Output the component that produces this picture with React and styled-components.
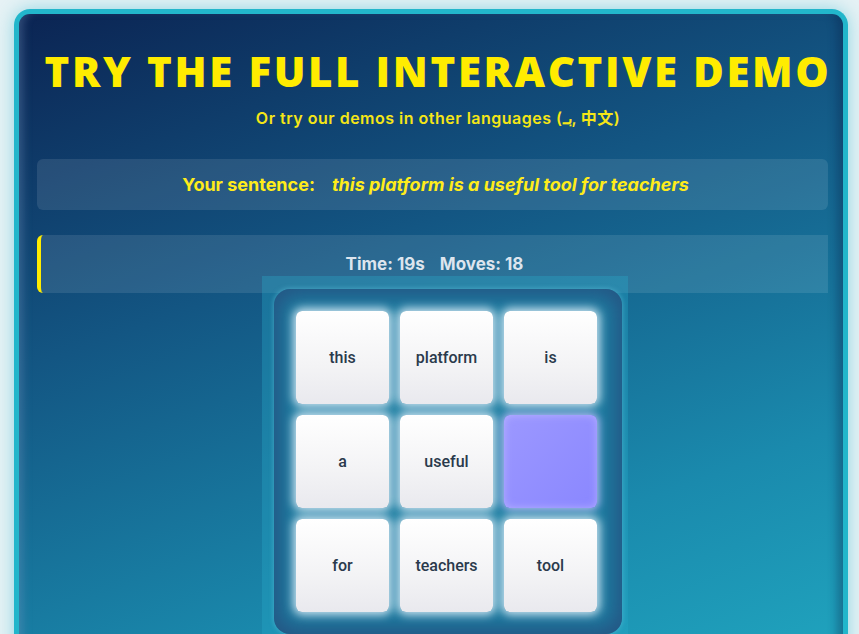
import React from "react";
import styled, { createGlobalStyle } from "styled-components";

const Global = createGlobalStyle`
  html, body { margin: 0; padding: 0; height: 100%; overflow: hidden; }
  body { background: #e6f2f5; font-family: "Inter", "Noto Sans", sans-serif; }
`;

const Page = styled.div`
  padding: 9px 11px 0 14px;
`;

const Card = styled.section`
  position: relative;
  height: 720px;
  border: 5px solid #22b6cb;
  border-bottom: none;
  border-radius: 16px 16px 0 0;
  background: linear-gradient(160deg, #0b2453 0%, #135683 35%, #1a8aad 70%, #22adc4 100%);
  box-shadow: 0 0 18px rgba(40, 180, 205, 0.45), inset 8px 0 8px -4px rgba(120, 150, 190, 0.35),
    inset -10px 0 10px -4px rgba(10, 30, 70, 0.35);
  padding: 0 15px 0 18px;
  overflow: hidden;
`;

const Title = styled.h1`
  margin: 31px -11px 0 0;
  white-space: nowrap;
  text-align: center;
  font-family: "Open Sans", sans-serif;
  font-weight: 800;
  font-size: 42px;
  letter-spacing: 2.6px;
  line-height: 52px;
  color: #ffec00;
`;

const Sub = styled.p`
  margin: 8px -11px 0 0;
  white-space: nowrap;
  text-align: center;
  font-family: "Inter", "Noto Sans", "Noto Sans CJK SC", sans-serif;
  font-weight: 600;
  font-size: 16px;
  letter-spacing: 0.5px;
  color: #f5e616;
`;

const SentenceBox = styled.div`
  margin-top: 30px;
  height: 51px;
  border-radius: 6px;
  background: rgba(255, 255, 255, 0.1);
  display: flex;
  align-items: center;
  justify-content: center;
  gap: 17px;
  padding-left: 6px;
  font-family: "Inter", sans-serif;
  font-weight: 700;
  font-size: 18px;
  color: #ffec1a;
`;

const Italic = styled.em`
  font-style: italic;
`;

const StatsBox = styled.div`
  margin-top: 25px;
  height: 58px;
  box-sizing: border-box;
  border-left: 4px solid #ffec00;
  border-radius: 6px 0 0 6px;
  background: rgba(255, 255, 255, 0.1);
  display: flex;
  justify-content: center;
  gap: 15px;
  padding: 19px 0 0 0;
  font-family: "Inter", sans-serif;
  font-weight: 700;
  font-size: 17px;
  color: #dde5ee;
`;

const BoardWrap = styled.div`
  position: relative;
  margin: -17px 0 0 225px;
  width: 366px;
  height: 400px;
  background: rgba(40, 170, 200, 0.35);
  padding: 13px 6px 0 12px;
  box-sizing: border-box;
`;

const Board = styled.div`
  border-radius: 16px;
  background: #1c7ea2;
  box-shadow: 0 0 4px 1px rgba(90, 190, 215, 0.5), inset 0 0 22px 7px rgba(40, 70, 120, 0.75);
  padding: 22px 22px;
  display: grid;
  grid-template-columns: repeat(3, 93px);
  grid-auto-rows: 93px;
  column-gap: 11px;
  row-gap: 11px;
`;

const Tile = styled.div`
  border-radius: 6px;
  display: flex;
  align-items: center;
  justify-content: center;
  font-family: "Roboto", sans-serif;
  font-weight: 500;
  font-size: 16px;
  color: #2a3a4c;
  background: ${(p) =>
    p.$empty
      ? "linear-gradient(135deg, #9c98ff, #8a87ff)"
      : "linear-gradient(180deg, #ffffff 0%, #f3f3f5 60%, #e9e9ee 100%)"};
  box-shadow: ${(p) =>
    p.$empty
      ? "0 0 8px 2px rgba(200, 195, 255, 0.9), inset 0 0 8px rgba(200, 195, 255, 0.6)"
      : "0 0 10px 3px rgba(235, 245, 255, 0.85)"};
`;

const tiles = ["this", "platform", "is", "a", "useful", "", "for", "teachers", "tool"];

export default function App() {
  return (
    <Page>
      <Global />
      <Card>
        <Title>TRY THE FULL INTERACTIVE DEMO</Title>
        <Sub>Or try our demos in other languages (بـ, 中文)</Sub>
        <SentenceBox>
          <span>Your sentence:</span>
          <Italic>this platform is a useful tool for teachers</Italic>
        </SentenceBox>
        <StatsBox>
          <span>Time: 19s</span>
          <span>Moves: 18</span>
        </StatsBox>
        <BoardWrap>
          <Board>
            {tiles.map((t, i) => (
              <Tile key={i} $empty={t === ""}>
                {t}
              </Tile>
            ))}
          </Board>
        </BoardWrap>
      </Card>
    </Page>
  );
}
